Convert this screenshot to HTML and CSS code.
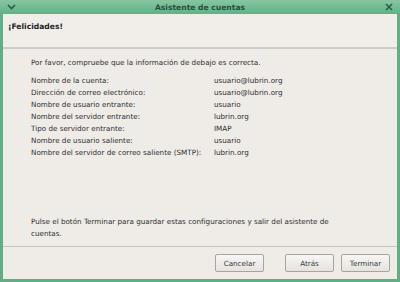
FILE: index.html
```html
<!DOCTYPE html>
<html lang="es">
<head>
  <meta charset="UTF-8">
  <title>Asistente de cuentas</title>
  <link rel="stylesheet" href="styles.css">
</head>
<body>
  <div class="window">
    <div class="titlebar">
      <span class="menu-btn">
        <svg width="9" height="6" viewBox="0 0 9 6"><path d="M1 1 L4.5 4.5 L8 1" fill="none" stroke="#2f5a43" stroke-width="1.6"/></svg>
      </span>
      <span class="title">Asistente de cuentas</span>
      <span class="close-btn">
        <svg width="8" height="8" viewBox="0 0 8 8"><path d="M1 1 L7 7 M7 1 L1 7" fill="none" stroke="#2f5a43" stroke-width="1.6"/></svg>
      </span>
    </div>
    <div class="content">
      <div class="header">¡Felicidades!</div>
      <div class="body">
        <p class="intro">Por favor, compruebe que la información de debajo es correcta.</p>
        <div class="summary">
          <span>Nombre de la cuenta:</span><span>usuario@lubrin.org</span>
          <span>Dirección de correo electrónico:</span><span>usuario@lubrin.org</span>
          <span>Nombre de usuario entrante:</span><span>usuario</span>
          <span>Nombre del servidor entrante:</span><span>lubrin.org</span>
          <span>Tipo de servidor entrante:</span><span>IMAP</span>
          <span>Nombre de usuario saliente:</span><span>usuario</span>
          <span>Nombre del servidor de correo saliente (SMTP):</span><span>lubrin.org</span>
        </div>
        <p class="outro">Pulse el botón Terminar para guardar estas configuraciones y salir del asistente de cuentas.</p>
      </div>
      <div class="buttons">
        <button class="btn">Cancelar</button>
        <span class="spacer"></span>
        <button class="btn">Atrás</button>
        <button class="btn">Terminar</button>
      </div>
    </div>
  </div>
</body>
</html>
```

FILE: styles.css
```css
body { margin: 0; padding: 0; font-family: "DejaVu Sans", sans-serif; font-size: 7.2px; color: #2e2e2e; }
.window {
  width: 400px; height: 282px; box-sizing: border-box; display: flex; flex-direction: column;
  background: #5fae85; padding: 0 3px 3px 3px;
}
.titlebar {
  height: 14px; display: flex; align-items: center; justify-content: space-between;
  background: linear-gradient(#86c6a2, #62b086); margin: 0 -3px; padding: 0 6px;
}
.title { font-weight: bold; font-size: 7.6px; color: #2c4d3b; }
.menu-btn, .close-btn { display: flex; width: 10px; justify-content: center; }
.content { flex: 1; background: #efece8; display: flex; flex-direction: column; }
.header {
  height: 35px; box-sizing: border-box; padding: 8px 5px 0; font-weight: bold; font-size: 7.6px;
  color: #1e1e1e; border-bottom: 2px solid #cfcbc6; background: #f1eeea;
}
.body { flex: 1; padding: 0 0 0 28px; }
.intro { margin: 9px 0 8px; }
.summary { display: grid; grid-template-columns: 183px auto; line-height: 12px; }
.outro { margin: 57px 0 0 0; width: 315px; line-height: 12px; }
.buttons {
  height: 33px; box-sizing: border-box; border-top: 1px solid #c8c4bf; display: flex;
  align-items: center; padding: 0 7px 0 0; justify-content: flex-end; gap: 7px;
}
.spacer { width: 7px; }
.btn {
  width: 49px; height: 18px; font-family: "DejaVu Sans", sans-serif; font-size: 7.2px; color: #3a3a3a;
  background: linear-gradient(#f7f6f4, #e6e3df); border: 1px solid #a9a49e; border-radius: 2px; padding: 0;
}
```
